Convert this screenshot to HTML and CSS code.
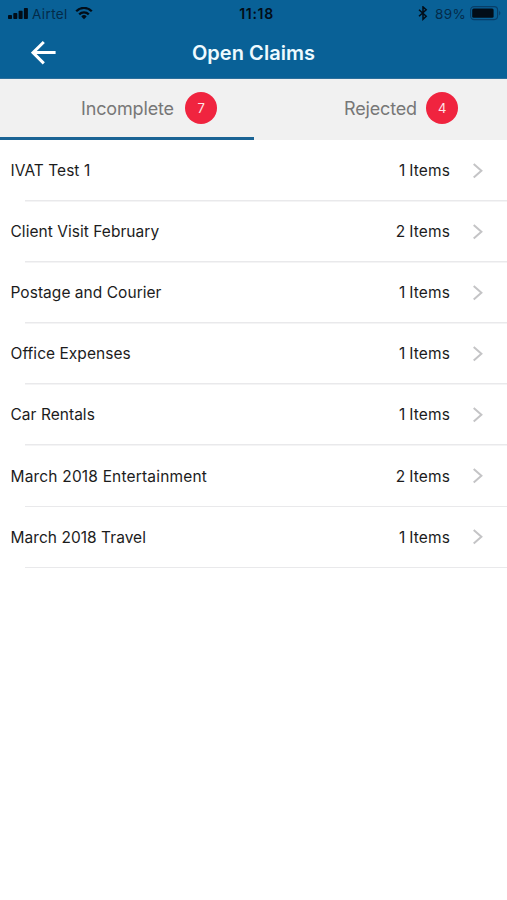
FILE: index.html
```html
<!DOCTYPE html>
<html lang="en">
<head>
<meta charset="utf-8">
<title>Open Claims</title>
<link rel="stylesheet" href="styles.css">
</head>
<body>
<svg width="0" height="0" class="defs"><symbol id="chevron" viewBox="0 0 12 18"><path d="M1.7 1.9 9.4 8.7 1.7 15.5" fill="none" stroke="#c4c4c6" stroke-width="2"/></symbol></svg>
<header class="top">
  <div class="status">
    <div class="carrier">
      <svg width="20" height="12" viewBox="0 0 20 12"><rect x="0" y="7" width="4" height="4" rx=".8"/><rect x="5.3" y="5" width="4" height="6" rx=".8"/><rect x="10.6" y="2.8" width="4" height="8.2" rx=".8"/><rect x="15.9" y="0" width="4" height="11" rx=".8"/></svg>
      <span class="carrier-name">Airtel</span>
      <svg width="18" height="13" viewBox="0 0 18 13"><g fill="none" stroke="#020d18" stroke-width="2.3"><path d="M1.2 4.2a11 11 0 0 1 15.6 0"/><path d="M4.2 7.4a6.8 6.8 0 0 1 9.6 0"/></g><path d="M6.3 9.4a3.9 3.9 0 0 1 5.4 0L9 12.2z"/></svg>
    </div>
    <span class="time">11:18</span>
    <div class="power">
      <svg width="10" height="15" viewBox="0 0 10 15"><path d="M1 3.7 8.2 10.3 5 13.3V.9l3.2 2.8L1 10.3" fill="none" stroke="#020d18" stroke-width="1.5"/></svg>
      <span class="percent">89%</span>
      <svg width="32" height="15" viewBox="0 0 32 15"><rect x=".6" y=".6" width="27" height="13" rx="3.5" fill="none" stroke="#083e68" stroke-width="1.1"/><rect x="2.2" y="2.4" width="21.4" height="9.4" rx="1.5"/><path d="M29.2 4.8q2.4 2.3 0 4.6z" fill="#083e68"/></svg>
    </div>
  </div>
  <div class="nav">
    <svg class="back" width="26" height="26" viewBox="0 0 26 26"><path d="M12.8 2 2 12.6l10.8 10.8M2.4 12.6H24.6" fill="none" stroke="#fff" stroke-width="3"/></svg>
    <h1>Open Claims</h1>
  </div>
</header>
<nav class="tabs">
  <div class="tab active"><span class="incomplete">Incomplete</span><span class="badge">7</span></div>
  <div class="tab second"><span class="rejected">Rejected</span><span class="badge">4</span></div>
</nav>
<ul class="claims">
  <li><span class="name">IVAT Test 1</span><span class="count">1 Items</span><svg><use href="#chevron"/></svg></li>
  <li><span class="name">Client Visit February</span><span class="count">2 Items</span><svg><use href="#chevron"/></svg></li>
  <li><span class="name">Postage and Courier</span><span class="count">1 Items</span><svg><use href="#chevron"/></svg></li>
  <li><span class="name">Office Expenses</span><span class="count">1 Items</span><svg><use href="#chevron"/></svg></li>
  <li><span class="name">Car Rentals</span><span class="count">1 Items</span><svg><use href="#chevron"/></svg></li>
  <li><span class="name wide">March 2018 Entertainment</span><span class="count">2 Items</span><svg><use href="#chevron"/></svg></li>
  <li><span class="name">March 2018 Travel</span><span class="count">1 Items</span><svg><use href="#chevron"/></svg></li>
</ul>
</body>
</html>
```
FILE: styles.css
```css
* { box-sizing: border-box; }
body { margin: 0; background: #fff; font-family: Inter, "Liberation Sans", sans-serif; color: #1c1c1c; }
.defs { display: block; }
.top { height: 79px; background: #096197; border-bottom: 1px solid #2d6f9b; }
.status { height: 27px; display: grid; grid-template-columns: 1fr auto 1fr; align-items: center; padding: 0 5px 0 8px; color: #020d18; fill: #020d18; font-size: 13.5px; }
.carrier, .power { display: flex; align-items: center; }
.power { justify-content: flex-end; }
.carrier-name { margin: 0 7px 0 4px; color: #042b49; letter-spacing: .4px; }
.time { font-weight: 600; font-size: 14px; letter-spacing: .7px; margin-left: 3px; }
.percent { margin: 0 4px 0 7px; color: #042b49; letter-spacing: .3px; }
.nav { height: 51px; display: grid; grid-template-columns: 1fr auto 1fr; align-items: center; }
.back { margin-left: 31px; }
h1 { margin: 0; font-size: 20px; font-weight: 600; letter-spacing: .05px; color: #eefaff; }
.tabs { height: 61px; display: flex; background: #f1f1f1; color: #777; font-size: 18px; letter-spacing: -.15px; }
.tab { width: 254px; display: flex; align-items: center; padding: 0 0 0 81px; border-bottom: 3px solid transparent; }
.active { border-bottom-color: #1b6495; }
.second { width: 253px; padding-left: 90px; }
.incomplete { width: 104px; }
.rejected { width: 82px; }
.badge { width: 32px; height: 32px; border-radius: 50%; background: #f0243f; color: #ffe4e8; font-size: 13px; display: flex; align-items: center; justify-content: center; }
.claims { margin: 0; padding: .5px 0 0; list-style: none; }
.claims li { height: 61.1px; display: flex; align-items: center; padding: 0 23px 1px 10.5px; font-size: 15.5px; letter-spacing: .04px; background: linear-gradient(#e9e9eb, #e9e9eb) 25px 100% / 100% 1.5px no-repeat; }
.claims .wide { letter-spacing: .18px; }
.count { margin-left: auto; margin-right: 22px; word-spacing: -.6px; letter-spacing: .12px; }
.claims svg { width: 12px; height: 18px; }
```
